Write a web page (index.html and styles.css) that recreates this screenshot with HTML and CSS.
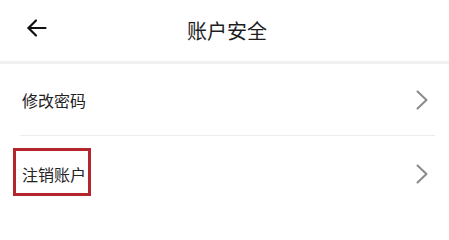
FILE: index.html
```html
<!DOCTYPE html>
<html lang="zh">
<head>
<meta charset="utf-8">
<title>账户安全</title>
<link rel="stylesheet" href="styles.css">
</head>
<body>
<div class="page">
  <header class="topbar">
    <span class="back">
      <svg width="21" height="20" viewBox="0 0 21 20" fill="none" stroke="#111" stroke-width="2.2" stroke-linecap="round" stroke-linejoin="round">
        <line x1="2.5" y1="10" x2="19.5" y2="10"/>
        <polyline points="10,2.5 2.5,10 10,17.5"/>
      </svg>
    </span>
    <h1 class="title">账户安全</h1>
  </header>
  <div class="band"></div>
  <ul class="list">
    <li class="row row-first">
      <span class="label">修改密码</span>
      <svg class="chev" width="12" height="20" viewBox="0 0 12 20" fill="none" stroke="#8a8a8a" stroke-width="2" stroke-linecap="round" stroke-linejoin="round"><polyline points="1.5,1.5 10.5,10 1.5,18.5"/></svg>
    </li>
    <li class="divider"></li>
    <li class="row row-second">
      <span class="label">注销账户</span>
      <svg class="chev" width="12" height="20" viewBox="0 0 12 20" fill="none" stroke="#8a8a8a" stroke-width="2" stroke-linecap="round" stroke-linejoin="round"><polyline points="1.5,1.5 10.5,10 1.5,18.5"/></svg>
      <span class="highlight"></span>
    </li>
  </ul>
</div>
</body>
</html>
```
FILE: styles.css
```css
html, body {
  margin: 0;
  padding: 0;
  background: #ffffff;
}
body {
  font-family: "Noto Sans CJK SC", "Noto Sans", sans-serif;
  color: #222222;
  overflow: hidden;
}
.page {
  width: 449px;
  height: 208px;
  overflow: hidden;
}
.topbar {
  position: relative;
  height: 61px;
  display: flex;
  align-items: center;
  justify-content: center;
}
.back {
  position: absolute;
  left: 26px;
  top: 18px;
  display: flex;
}
.title {
  margin: 0 0 0 5px;
  font-size: 20px;
  font-weight: 400;
  line-height: 1;
  color: #1e1e1e;
  padding-top: 0;
}
.band {
  height: 3px;
  background: #f1f1f1;
}
.list {
  list-style: none;
  margin: 0;
  padding: 0;
}
.row {
  position: relative;
  display: flex;
  align-items: center;
  justify-content: space-between;
  padding: 0 21px 0 22px;
}
.row-first {
  height: 71px;
}
.row-second {
  height: 75px;
}
.label {
  font-size: 16px;
  line-height: 1;
  color: #222222;
}
.chev {
  display: block;
}
.divider {
  height: 1px;
  margin: 0 14px 0 20px;
  background: #ececec;
}
.highlight {
  position: absolute;
  left: 13px;
  top: 12px;
  width: 72px;
  height: 42px;
  border: 3px solid #b3262b;
}
```
